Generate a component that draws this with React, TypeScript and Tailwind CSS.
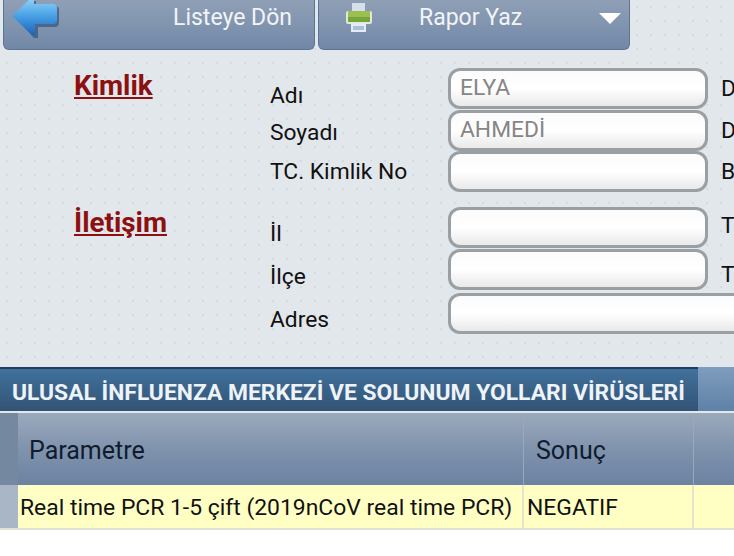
const font = { fontFamily: 'Roboto, sans-serif' };

const topRows = [
  { label: 'Adı', value: 'ELYA', side: 'D', h: 'h-[42px]', labelPad: 'pt-[11px]', sidePad: 'pt-0' },
  { label: 'Soyadı', value: 'AHMEDİ', side: 'D', h: 'h-[41px]', labelPad: 'pt-[6px]', sidePad: 'pt-0' },
  { label: 'TC. Kimlik No', value: '', side: 'B', h: 'h-[42px]', labelPad: 'pt-[4px]', sidePad: 'pt-0' },
];

const bottomRows = [
  { label: 'İl', value: '', side: 'T', h: 'h-[42px]', labelPad: 'pt-[10px]', sidePad: 'pt-[4px]' },
  { label: 'İlçe', value: '', side: 'T', h: 'h-[44px]', labelPad: 'pt-[11px]', sidePad: 'pt-[11px]' },
];

function BackArrow() {
  return (
    <svg width="54" height="40" viewBox="0 0 54 40" className="shrink-0 blur-[0.5px]">
      <defs>
        <linearGradient id="arrowFill" x1="0" y1="0" x2="0" y2="1">
          <stop offset="0" stopColor="#8ed0f7" />
          <stop offset="0.45" stopColor="#4aa3e6" />
          <stop offset="1" stopColor="#1c63bb" />
        </linearGradient>
      </defs>
      <path
        d="M8 17 L25 1 L29 1 L29 6 L48 6 Q52 6 52 10 L52 22 Q52 27 48 27 L31 27 L31 38 L27 38 Z"
        fill="#1f4270"
        opacity="0.55"
      />
      <path
        d="M5 16 L23 -1 L27 -1 L27 4 L46 4 Q50 4 50 8 L50 20 Q50 24 46 24 L28 24 L28 35 L25 35 Z"
        fill="url(#arrowFill)"
      />
    </svg>
  );
}

function PrinterIcon() {
  return (
    <svg width="28" height="32" viewBox="0 0 28 32" className="shrink-0 blur-[0.5px]">
      <rect x="7" y="2" width="13" height="9" fill="#d6dfea" />
      <rect x="1" y="10" width="26" height="13" rx="2" fill="#e3e8d8" />
      <rect x="3" y="10" width="22" height="11" fill="#9bc04f" />
      <rect x="3" y="16" width="22" height="5" fill="#76a53a" />
      <rect x="6" y="22" width="15" height="9" fill="#e6ecf4" />
      <rect x="8" y="25" width="11" height="4" fill="#a9bfdc" />
    </svg>
  );
}

function Field({ value, wide }: { value: string; wide?: boolean }) {
  return (
    <div
      className={`h-[41px] shrink-0 flex items-center px-[9px] rounded-[12px] border-[3px] border-[#9a9fa3] bg-gradient-to-b from-[#fbfbfb] via-[#ffffff] to-[#e9e9e9] text-[22.8px] text-[#868686] ${
        wide ? 'w-[300px] rounded-r-none border-r-0' : 'w-[260px]'
      }`}
    >
      {value}
    </div>
  );
}

export default function App() {
  return (
    <div className="w-[734px] h-[556px] overflow-hidden bg-white" style={font}>
      <div className="h-[366px] bg-[#e2e7ec] bg-[radial-gradient(#d5dbe1_1px,transparent_1.5px)] bg-[size:14px_14px]">
        {/* Toolbar */}
        <div className="flex gap-[3px] pl-[3px] h-[50px]">
          <div className="w-[312px] flex items-start justify-end pr-[22px] pt-[1px] rounded-b-[6px] border border-t-0 border-[#5c7597] bg-gradient-to-b from-[#8f9fb6] via-[#8195af] to-[#7187a7] text-[23px] text-[#f2f4f7] relative">
            <span className="absolute left-[3px] top-0">
              <BackArrow />
            </span>
            Listeye Dön
          </div>
          <div className="w-[312px] flex items-start pl-[26px] pt-[1px] rounded-b-[6px] border border-t-0 border-[#5c7597] bg-gradient-to-b from-[#8f9fb6] via-[#8195af] to-[#7187a7] text-[23px] text-[#f2f4f7]">
            <PrinterIcon />
            <span className="ml-[46px]">Rapor Yaz</span>
            <span className="ml-[77px] mt-[12px] w-0 h-0 border-l-[11px] border-r-[11px] border-t-[11px] border-l-transparent border-r-transparent border-t-white" />
          </div>
        </div>

        {/* Form */}
        <div className="flex pt-[18px]">
          <div className="w-[270px] pl-[74px] shrink-0">
            <div className="h-[137px] text-[27.8px] leading-[36px] font-bold text-[#8c1010] underline">Kimlik</div>
            <div className="text-[27.8px] leading-[36px] font-bold text-[#8c1010] underline">İletişim</div>
          </div>
          <div className="flex-1 text-[22.8px] text-[#111]">
            <div className="flex flex-col h-[139px]">
              {topRows.map((r) => (
                <div key={r.label} className={`flex ${r.h}`}>
                  <div className={`w-[178px] shrink-0 ${r.labelPad}`}>{r.label}</div>
                  <Field value={r.value} />
                  <div className={`ml-[13px] ${r.sidePad} leading-[41px]`}>{r.side}</div>
                </div>
              ))}
            </div>
            {bottomRows.map((r) => (
              <div key={r.label} className={`flex ${r.h}`}>
                <div className={`w-[178px] shrink-0 ${r.labelPad}`}>{r.label}</div>
                <Field value={r.value} />
                <div className={`ml-[13px] ${r.sidePad} leading-[30px]`}>{r.side}</div>
              </div>
            ))}
            <div className="flex h-[41px]">
              <div className="w-[178px] shrink-0 pt-[10px]">Adres</div>
              <Field value="" wide />
            </div>
          </div>
        </div>
      </div>

      {/* Result table */}
      <div className="flex h-[47px] pt-px bg-[#e2e7ec]">
        <div className="w-[698px] h-[44px] flex items-center pt-[6px] pl-[12px] border-t-2 border-[#1f3d5e] bg-gradient-to-b from-[#41719c] to-[#325375] text-[22.85px] font-bold text-[#eef3f8] whitespace-nowrap">
          ULUSAL İNFLUENZA MERKEZİ VE SOLUNUM YOLLARI VİRÜSLERİ
        </div>
        <div className="flex-1 h-[44px] bg-gradient-to-b from-[#7f9dbd] to-[#5f81a7]" />
      </div>
      <div className="flex h-[72px] text-[25px] text-[#0f1c2e] bg-gradient-to-b from-[#9ba9bc] via-[#8093ad] to-[#6b82a2]">
        <div className="w-[18px] bg-[#74889f]" />
        <div className="w-[506px] flex items-center pt-[3px] pl-[11px] border-r border-[#9aa8b9]">Parametre</div>
        <div className="w-[170px] flex items-center pt-[3px] pl-[12px] border-r border-[#9aa8b9]">Sonuç</div>
        <div className="flex-1" />
      </div>
      <div className="flex h-[45px] text-[22.9px] text-[#111] bg-[#ffffc4] border-b-2 border-[#dfe2d4]">
        <div className="w-[18px] bg-[#a9b6c6]" />
        <div className="w-[506px] flex items-center pt-[3px] pl-[2px] border-r-2 border-[#e4e6cf] whitespace-nowrap">
          Real time PCR 1-5 çift (2019nCoV real time PCR)
        </div>
        <div className="w-[170px] flex items-center pt-[3px] pl-[3px] border-r-2 border-[#e4e6cf]">NEGATIF</div>
        <div className="flex-1" />
      </div>
    </div>
  );
}
